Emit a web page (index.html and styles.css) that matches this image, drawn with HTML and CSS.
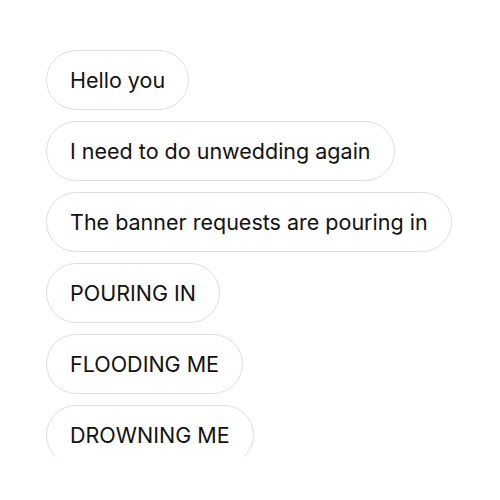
FILE: index.html
```html
<!DOCTYPE html>
<html lang="en">
<head>
  <meta charset="UTF-8" />
  <title>Messages</title>
  <link rel="stylesheet" href="styles.css">
</head>
<body>
  <!-- Chat thread (cropped at the bottom) -->
  <div class="thread">
    <div class="bubble">Hello you</div>
    <div class="bubble">I need to do unwedding again</div>
    <div class="bubble">The banner requests are pouring in</div>
    <div class="bubble">POURING IN</div>
    <div class="bubble">FLOODING ME</div>
    <div class="bubble">DROWNING ME</div>
  </div>
</body>
</html>
```

FILE: styles.css
```css
/* Basic resets */
html, body {
  margin: 0;
  padding: 0;
  background-color: #fff;
  color: #111;
  font-family: Inter, "Liberation Sans", Arial, sans-serif;
}

/* Thread of incoming messages */
.thread {
  height: 457px;
  box-sizing: border-box;
  padding: 50px 0 0 46px;
  overflow: hidden;
  display: flex;
  flex-direction: column;
  align-items: flex-start;
  gap: 11px;
}

.bubble {
  flex-shrink: 0;
  height: 60px;
  box-sizing: border-box;
  display: flex;
  align-items: center;
  padding: 0 23px 0 23px;
  border: 1px solid #dedede;
  border-radius: 30px;
  font-size: 21.5px;
  white-space: nowrap;
}
```
